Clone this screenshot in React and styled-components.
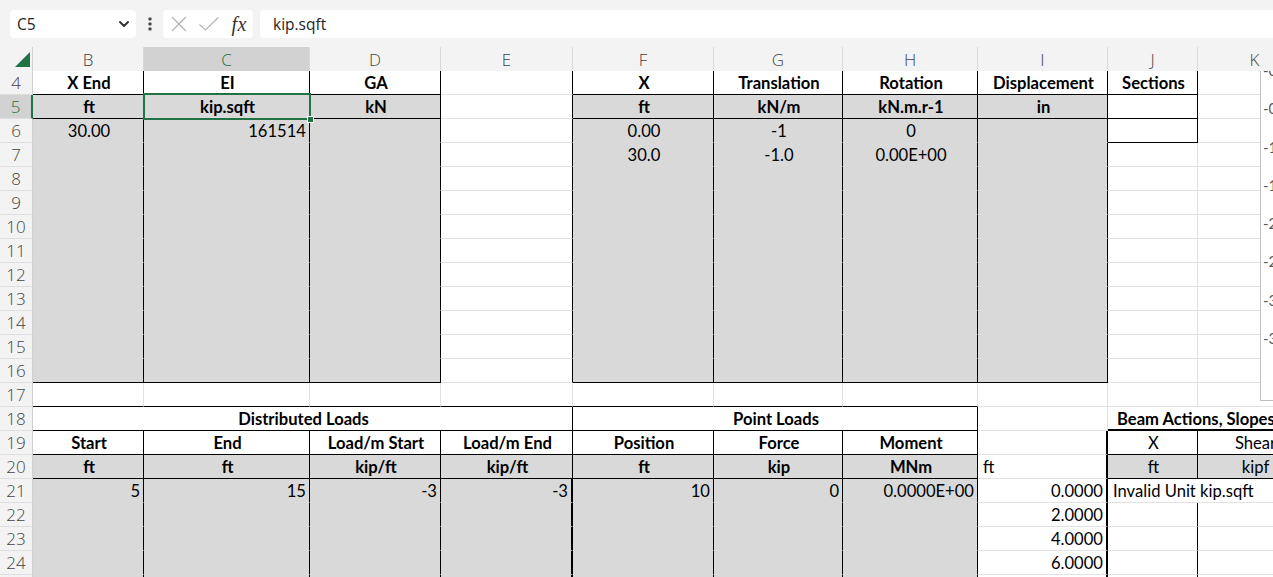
import React from 'react';
import styled, { createGlobalStyle } from 'styled-components';

const GRID = '#e1e1e1';
const FILL = '#d9d9d9';
const GREEN = '#217346';
const HEAD_BG = '#f3f3f3';
const COLS = [33, 111, 166, 131, 132, 141, 129, 135, 130, 90, 114];
const TEMPLATE = COLS.map((w) => `${w}px`).join(' ');
const LETTERS = ['B', 'C', 'D', 'E', 'F', 'G', 'H', 'I', 'J', 'K'];

const Global = createGlobalStyle`
  html, body { margin: 0; padding: 0; background: #fff; overflow: hidden; }
  * { box-sizing: border-box; }
`;

const Page = styled.div`
  width: 1273px;
  height: 577px;
  overflow: hidden;
  display: flex;
  flex-direction: column;
  background: #fff;
`;

const FormulaBar = styled.div`
  height: 47px;
  flex: none;
  background: ${HEAD_BG};
  display: flex;
  align-items: flex-start;
  padding: 10px 0 0 10px;
  font-family: 'Open Sans', 'Noto Sans', sans-serif;
  font-size: 15.5px;
  color: #242424;
`;

const NameBox = styled.div`
  width: 126px;
  height: 28px;
  background: #fff;
  border-radius: 4px;
  display: flex;
  align-items: center;
  justify-content: space-between;
  padding: 0 5px 0 7px;
`;

const Dots = styled.div`
  width: 27px;
  height: 28px;
  display: flex;
  align-items: center;
  justify-content: center;
`;

const FxBox = styled.div`
  width: 90px;
  height: 28px;
  background: #fff;
  border-radius: 4px;
  display: flex;
  align-items: center;
  padding: 0 6px 0 7px;
  gap: 10px;
`;

const FxText = styled.span`
  font-family: 'Liberation Serif', serif;
  font-style: italic;
  font-size: 20px;
  color: #333;
  margin-left: 2px;
  letter-spacing: 0.5px;
`;

const FormulaInput = styled.div`
  flex: 1;
  height: 28px;
  margin-left: 7px;
  background: #fff;
  border-radius: 4px 0 0 4px;
  display: flex;
  align-items: center;
  padding-left: 13px;
`;

const HeaderRow = styled.div`
  display: grid;
  grid-template-columns: ${TEMPLATE};
  height: 24px;
  flex: none;
`;

const Corner = styled.div`
  background: ${HEAD_BG};
  border-right: 1px solid #d0d0d0;
  border-bottom: 1px solid #bdbdbd;
  position: relative;
`;

const ColHead = styled.div`
  background: ${(p) => (p.$active ? '#d2d2d2' : HEAD_BG)};
  border-right: 1px solid #dadada;
  border-bottom: ${(p) => (p.$active ? `2px solid ${GREEN}` : '1px solid #bdbdbd')};
  display: flex;
  align-items: center;
  justify-content: center;
  font-family: 'Open Sans', 'Noto Sans', sans-serif;
  font-weight: 300;
  font-size: 17px;
  color: ${(p) => (p.$active ? GREEN : '#444')};
  padding-top: ${(p) => (p.$active ? '1px' : '0')};
`;

const Body = styled.div`
  position: relative;
  display: grid;
  grid-template-columns: ${TEMPLATE};
  grid-auto-rows: 24px;
  flex: 1;
  overflow: hidden;
`;

const RowHead = styled.div`
  background: ${(p) => (p.$active ? '#d2d2d2' : HEAD_BG)};
  border-right: ${(p) => (p.$active ? `2px solid ${GREEN}` : '1px solid #d0d0d0')};
  border-bottom: 1px solid #dedede;
  display: flex;
  align-items: center;
  justify-content: center;
  font-family: 'Open Sans', 'Noto Sans', sans-serif;
  font-weight: 300;
  font-size: 17px;
  color: ${(p) => (p.$active ? GREEN : '#444')};
`;

const lineColor = (kind, fill) => (kind === 'k' ? '#000' : fill ? FILL : GRID);
const JUSTIFY = { left: 'flex-start', right: 'flex-end', center: 'center' };

const Cell = styled.div`
  position: ${(p) => (p.$sel ? 'relative' : 'static')};
  z-index: ${(p) => (p.$sel ? 2 : 'auto')};
  grid-column: span ${(p) => p.$span || 1};
  background: ${(p) => (p.$fill ? FILL : '#fff')};
  border-right: ${(p) => p.$rw || 1}px solid ${(p) => lineColor(p.$r, p.$fill)};
  border-bottom: ${(p) => p.$bw || 1}px solid ${(p) => lineColor(p.$b, p.$fill)};
  display: flex;
  align-items: center;
  justify-content: ${(p) => JUSTIFY[p.$align || 'center']};
  padding: 1px 3px 0 ${(p) => (p.$indent ? 9 : 5)}px;
  font-family: Lato, 'Liberation Sans', sans-serif;
  font-size: 16.6px;
  font-weight: ${(p) => (p.$bold ? 700 : 400)};
  color: #000;
  white-space: nowrap;
`;

const Selection = styled.div`
  position: absolute;
  left: -1px;
  top: -2px;
  right: -2px;
  bottom: -2px;
  border: 2px solid ${GREEN};
  pointer-events: none;
`;

const Handle = styled.div`
  position: absolute;
  right: -5px;
  bottom: -5px;
  width: 7px;
  height: 7px;
  background: ${GREEN};
  border: 1px solid #fff;
`;

const Chart = styled.div`
  position: absolute;
  left: 1260px;
  top: -20px;
  width: 120px;
  height: 350px;
  background: #fff;
  border: 1px solid #bfbfbf;
  display: flex;
  flex-direction: column;
  gap: 18.3px;
  padding: 8px 0 0 2px;
  z-index: 3;
`;

const AxisLabel = styled.div`
  height: 20px;
  line-height: 20px;
  font-family: Lato, 'Liberation Sans', sans-serif;
  font-size: 15px;
  color: #595959;
`;

// ---- data ----
const k = 'k';
const grayRow = (opts = {}) => [
  { fill: 1, r: k, ...opts },
  { fill: 1, r: k, ...opts },
  { fill: 1, r: k, ...opts },
  { r: k },
  { fill: 1, r: k, ...opts },
  { fill: 1, r: k, ...opts },
  { fill: 1, r: k, ...opts },
  { fill: 1, r: k, ...opts },
  {},
  {},
];

const bottomRow = (i) => [
  { fill: 1, r: k },
  { fill: 1, r: k },
  { fill: 1, r: k },
  { fill: 1, r: k, rw: 2 },
  { fill: 1, r: k },
  { fill: 1, r: k },
  { fill: 1, r: k },
  { t: i, align: 'right', r: k, rw: 2 },
  { r: k },
  { r: k },
];

const hb = (t, extra = {}) => ({ t, bold: 1, r: k, b: k, ...extra });
const ub = (t, extra = {}) => ({ t, bold: 1, fill: 1, r: k, b: k, ...extra });

const ROWS = [
  {
    n: 4,
    cells: [hb('X End'), hb('EI'), hb('GA'), { r: k }, hb('X'), hb('Translation'), hb('Rotation'), hb('Displacement'), hb('Sections'), {}],
  },
  {
    n: 5,
    active: true,
    cells: [ub('ft'), ub('kip.sqft', { sel: 1 }), ub('kN'), { r: k }, ub('ft'), ub('kN/m'), ub('kN.m.r-1'), ub('in'), { r: k, b: k }, {}],
  },
  {
    n: 6,
    cells: [
      { t: '30.00', fill: 1, r: k },
      { t: '161514', align: 'right', fill: 1, r: k },
      { fill: 1, r: k },
      { r: k },
      { t: '0.00', fill: 1, r: k },
      { t: '-1', fill: 1, r: k },
      { t: '0', fill: 1, r: k },
      { fill: 1, r: k },
      { r: k, b: k },
      {},
    ],
  },
  {
    n: 7,
    cells: [
      { fill: 1, r: k },
      { fill: 1, r: k },
      { fill: 1, r: k },
      { r: k },
      { t: '30.0', fill: 1, r: k },
      { t: '-1.0', fill: 1, r: k },
      { t: '0.00E+00', fill: 1, r: k },
      { fill: 1, r: k },
      {},
      {},
    ],
  },
  ...[8, 9, 10, 11, 12, 13, 14, 15].map((n) => ({ n, cells: grayRow() })),
  { n: 16, cells: grayRow({ b: k }) },
  {
    n: 17,
    cells: [{ b: k }, { b: k }, { b: k }, { b: k }, { b: k }, { b: k }, { b: k }, {}, {}, {}],
  },
  {
    n: 18,
    cells: [
      hb('Distributed Loads', { span: 4 }),
      hb('Point Loads', { span: 3 }),
      {},
      { t: 'Beam Actions, Slopes, Deflections', bold: 1, span: 2, align: 'left', b: k, bw: 2, indent: 1 },
    ],
  },
  {
    n: 19,
    cells: [
      hb('Start'),
      hb('End'),
      hb('Load/m Start'),
      hb('Load/m End'),
      hb('Position'),
      hb('Force'),
      hb('Moment'),
      { r: k, rw: 2 },
      { t: 'X', r: k, b: k },
      { t: 'Shear', r: k, b: k },
    ],
  },
  {
    n: 20,
    cells: [
      ub('ft'),
      ub('ft'),
      ub('kip/ft'),
      ub('kip/ft'),
      ub('ft'),
      ub('kip'),
      ub('MNm'),
      { t: 'ft', align: 'left', r: k, rw: 2 },
      { t: 'ft', fill: 1, r: k, b: k },
      { t: 'kipf', fill: 1, r: k, b: k },
    ],
  },
  {
    n: 21,
    cells: [
      { t: '5', align: 'right', fill: 1, r: k },
      { t: '15', align: 'right', fill: 1, r: k },
      { t: '-3', align: 'right', fill: 1, r: k },
      { t: '-3', align: 'right', fill: 1, r: k, rw: 2 },
      { t: '10', align: 'right', fill: 1, r: k },
      { t: '0', align: 'right', fill: 1, r: k },
      { t: '0.0000E+00', align: 'right', fill: 1, r: k },
      { t: '0.0000', align: 'right', r: k, rw: 2 },
      { t: 'Invalid Unit kip.sqft', align: 'left', span: 2 },
    ],
  },
  { n: 22, cells: bottomRow('2.0000') },
  { n: 23, cells: bottomRow('4.0000') },
  { n: 24, cells: bottomRow('6.0000') },
  { n: 25, cells: bottomRow('8.0000') },
];

const AXIS = ['-0.1', '-0.6', '-1.1', '-1.6', '-2.1', '-2.6', '-3.1', '-3.6'];

function ChevronIcon() {
  return (
    <svg width="14" height="14" viewBox="0 0 14 14">
      <path d="M3 5 L7 9 L11 5" fill="none" stroke="#333" strokeWidth="2" strokeLinecap="round" strokeLinejoin="round" />
    </svg>
  );
}

function DotsIcon() {
  return (
    <svg width="6" height="16" viewBox="0 0 6 16">
      <rect x="1.5" y="1.5" width="3" height="3" rx="0.8" fill="#444" />
      <rect x="1.5" y="6.5" width="3" height="3" rx="0.8" fill="#444" />
      <rect x="1.5" y="11.5" width="3" height="3" rx="0.8" fill="#444" />
    </svg>
  );
}

function CancelIcon() {
  return (
    <svg width="18" height="18" viewBox="0 0 18 18">
      <path d="M2 2 L16 16 M16 2 L2 16" stroke="#b5b5b5" strokeWidth="1.3" fill="none" />
    </svg>
  );
}

function EnterIcon() {
  return (
    <svg width="22" height="16" viewBox="0 0 22 16">
      <path d="M1.5 8.5 L7.5 14 L20.5 1.5" stroke="#b5b5b5" strokeWidth="1.3" fill="none" />
    </svg>
  );
}

function SelectAll() {
  return (
    <svg width="33" height="23" viewBox="0 0 33 23" style={{ position: 'absolute', left: 0, top: 0 }}>
      <polygon points="15,20 30,20 30,5" fill={GREEN} />
    </svg>
  );
}

export default function App() {
  return (
    <Page>
      <Global />
      <FormulaBar>
        <NameBox>
          <span>C5</span>
          <ChevronIcon />
        </NameBox>
        <Dots>
          <DotsIcon />
        </Dots>
        <FxBox>
          <CancelIcon />
          <EnterIcon />
          <FxText>fx</FxText>
        </FxBox>
        <FormulaInput>kip.sqft</FormulaInput>
      </FormulaBar>
      <HeaderRow>
        <Corner>
          <SelectAll />
        </Corner>
        {LETTERS.map((l) => (
          <ColHead key={l} $active={l === 'C'}>
            {l}
          </ColHead>
        ))}
      </HeaderRow>
      <Body>
        {ROWS.map((row) => (
          <React.Fragment key={row.n}>
            <RowHead $active={row.active}>{row.n}</RowHead>
            {row.cells.map((c, i) => (
              <Cell
                key={i}
                $span={c.span}
                $fill={c.fill}
                $r={c.r}
                $b={c.b}
                $rw={c.rw}
                $bw={c.bw}
                $align={c.align}
                $bold={c.bold}
                $sel={c.sel}
                $indent={c.indent}
              >
                {c.t}
                {c.sel ? (
                  <Selection>
                    <Handle />
                  </Selection>
                ) : null}
              </Cell>
            ))}
          </React.Fragment>
        ))}
        <Chart>
          {AXIS.map((a) => (
            <AxisLabel key={a}>{a}</AxisLabel>
          ))}
        </Chart>
      </Body>
    </Page>
  );
}
